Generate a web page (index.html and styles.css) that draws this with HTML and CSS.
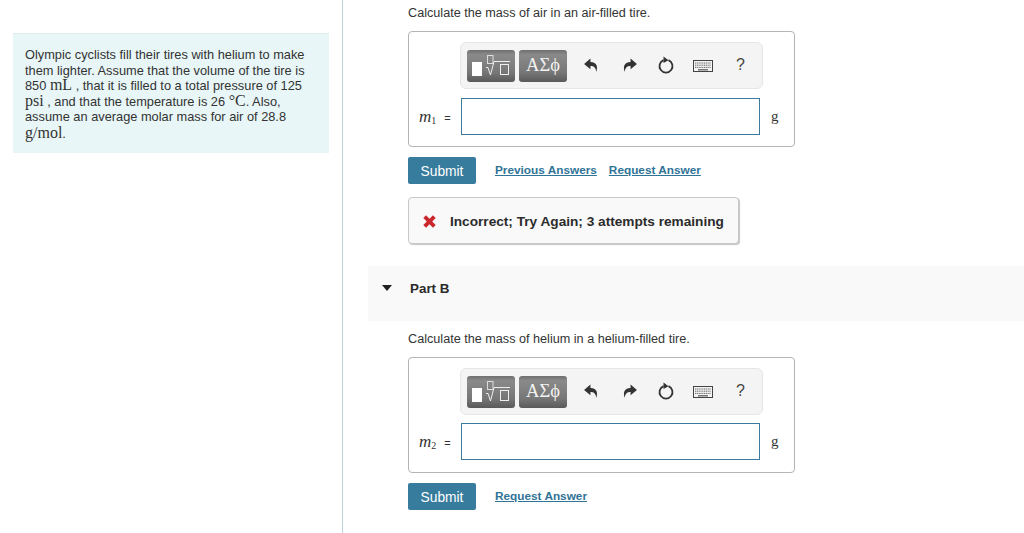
FILE: index.html
```html
<!DOCTYPE html>
<html lang="en">
<head>
    <meta charset="UTF-8">
    <title>Calculate the mass of air</title>
    <link rel="stylesheet" href="styles.css">
</head>
<body>
    <svg class="sprites" width="0" height="0">
        <symbol id="icoTemplate" viewBox="0 0 48 32">
            <rect x="5" y="12" width="10" height="14" fill="#fff"/>
            <rect x="20.500" y="5.500" width="5.500" height="8" fill="none" stroke="#ddd"/>
            <path d="M19 17.500h2l2.500 7.500 3.500-13.500H43" fill="none" stroke="#eee"/>
            <rect x="33.500" y="14.500" width="8" height="10" fill="none" stroke="#eee"/>
        </symbol>
        <symbol id="icoUndo" viewBox="0 0 16 16">
            <path d="M7 1.500 1 6.500l6 5V8.500c3 0 5 1 5.500 5.500 1.500-4.500 1-9-5.500-9.200z" fill="#333"/>
        </symbol>
        <symbol id="icoRedo" viewBox="0 0 16 16">
            <path d="M9 1.500l6 5-6 5V8.500c-3 0-5 1-5.500 5.500C2 9.500 2.500 5 9 4.800z" fill="#333"/>
        </symbol>
        <symbol id="icoReset" viewBox="0 0 18 18">
            <path d="M11.500 4.100a6.500 6.500 0 1 1-5 0" fill="none" stroke="#333" stroke-width="1.800"/>
            <path d="M6.500 0.500 11.500 4.200 6.500 7z" fill="#333"/>
        </symbol>
        <symbol id="icoKeys" viewBox="0 0 20 12">
            <rect x="0.500" y="0.500" width="19" height="11" fill="#f4f4f4" stroke="#444"/>
            <path d="M2 3h16M2 5.200h16M2 7.400h16" stroke="#666" stroke-dasharray="1.200 .6"/>
            <path d="M5 9.800h10" stroke="#555" stroke-width="1.200"/>
        </symbol>
    </svg>

    <aside class="intro-col">
        <div class="intro">
            Olympic cyclists fill their tires with helium to make<br>
            them lighter. Assume that the volume of the tire is<br>
            850 <span class="tex">mL</span> , that it is filled to a total pressure of 125<br>
            <span class="tex">psi</span> , and that the temperature is 26 <span class="tex">°C</span>. Also,<br>
            assume an average molar mass for air of 28.8
            <div class="intro-last"><span class="tex">g/mol</span>.</div>
        </div>
    </aside>

    <main class="main-col">
        <section class="part">
            <p class="prompt">Calculate the mass of air in an air-filled tire.</p>
            <div class="answer-box">
                <div class="toolbar">
                    <span class="tool-btn tool-tpl"><svg width="48" height="32"><use href="#icoTemplate"/></svg></span>
                    <span class="tool-btn tool-sym">ΑΣϕ</span>
                    <svg class="ico ico-undo"><use href="#icoUndo"/></svg>
                    <svg class="ico ico-redo"><use href="#icoRedo"/></svg>
                    <svg class="ico ico-reset"><use href="#icoReset"/></svg>
                    <svg class="ico ico-keys"><use href="#icoKeys"/></svg>
                    <span class="tool-help">?</span>
                </div>
                <div class="answer-row">
                    <span class="var"><i>m</i><sub>1</sub><span class="eq">=</span></span>
                    <input class="answer-input" type="text">
                    <span class="unit">g</span>
                </div>
            </div>
            <div class="actions">
                <button class="submit">Submit</button>
                <a class="link" href="#">Previous Answers</a>
                <a class="link" href="#">Request Answer</a>
            </div>
            <div class="feedback">
                <svg class="cross" width="15" height="15" viewBox="0 0 14 14"><path d="M2.500 2.500l9 9M11.500 2.500l-9 9" stroke="#c9282d" stroke-width="3.600"/></svg>
                <span>Incorrect; Try Again; 3 attempts remaining</span>
            </div>
        </section>

        <div class="part-head">
            <span class="caret"></span>
            <span class="part-title">Part B</span>
        </div>

        <section class="part part-b">
            <p class="prompt">Calculate the mass of helium in a helium-filled tire.</p>
            <div class="answer-box">
                <div class="toolbar">
                    <span class="tool-btn tool-tpl"><svg width="48" height="32"><use href="#icoTemplate"/></svg></span>
                    <span class="tool-btn tool-sym">ΑΣϕ</span>
                    <svg class="ico ico-undo"><use href="#icoUndo"/></svg>
                    <svg class="ico ico-redo"><use href="#icoRedo"/></svg>
                    <svg class="ico ico-reset"><use href="#icoReset"/></svg>
                    <svg class="ico ico-keys"><use href="#icoKeys"/></svg>
                    <span class="tool-help">?</span>
                </div>
                <div class="answer-row">
                    <span class="var"><i>m</i><sub>2</sub><span class="eq">=</span></span>
                    <input class="answer-input" type="text">
                    <span class="unit">g</span>
                </div>
            </div>
            <div class="actions">
                <button class="submit">Submit</button>
                <a class="link" href="#">Request Answer</a>
            </div>
        </section>
    </main>
</body>
</html>
```

FILE: styles.css
```css
body {
    margin: 0;
    height: 533px;
    overflow: hidden;
    display: flex;
    font-family: "Liberation Sans", Arial, sans-serif;
    font-size: 12.650px;
    color: #333;
    background: #fff;
}
.sprites {
    position: absolute;
}
.intro-col {
    width: 343px;
    height: 533px;
    flex-shrink: 0;
    box-sizing: border-box;
    border-right: 1px solid #b9d3de;
    padding-top: 33px;
    padding-left: 13px;
}
.intro {
    width: 316px;
    height: 120px;
    box-sizing: border-box;
    padding: 13px 0 0 12px;
    background: #e8f6f7;
    border-top: 1px solid #dfeaea;
    font-size: 12.800px;
    line-height: 15.600px;
    white-space: nowrap;
}
.intro-last {
    margin-top: 1px;
}
.tex {
    font-family: "Liberation Serif", "DejaVu Serif", serif;
    font-size: 16px;
    line-height: 0;
}
.main-col {
    flex: 1;
    min-width: 0;
}
.part {
    padding-left: 65px;
}
.prompt {
    margin: 0;
    height: 31px;
    padding-top: 6px;
    box-sizing: border-box;
    line-height: 15px;
}
.answer-box {
    width: 387px;
    height: 116px;
    box-sizing: border-box;
    padding: 10px 0 0 51px;
    border: 1px solid #b4b4b4;
    border-radius: 4px;
}
.toolbar {
    width: 303px;
    height: 47px;
    box-sizing: border-box;
    padding-left: 6px;
    position: relative;
    display: flex;
    align-items: center;
    gap: 4px;
    background: #f4f4f4;
    border: 1px solid #e6e6e6;
    border-radius: 6px;
}
.tool-btn {
    height: 32px;
    display: flex;
    align-items: center;
    justify-content: center;
    background: linear-gradient(#6f6f6f, #8a8a8a 15%, #777 70%, #5a5a5a);
    border-radius: 3px;
    color: #f2f2f2;
}
.tool-tpl {
    width: 48px;
}
.tool-sym {
    width: 48px;
    font-family: "Liberation Serif", "DejaVu Serif", serif;
    font-size: 18.500px;
}
.ico {
    position: absolute;
    top: 14px;
}
.ico-undo {
    left: 122px;
    width: 17px;
    height: 17px;
}
.ico-redo {
    left: 160px;
    width: 17px;
    height: 17px;
}
.ico-reset {
    left: 196px;
    top: 13px;
    width: 18px;
    height: 18px;
}
.ico-keys {
    left: 232px;
    top: 17px;
    width: 20px;
    height: 12px;
}
.tool-help {
    position: absolute;
    left: 275px;
    top: 13px;
    font-size: 16px;
    line-height: 18px;
    color: #444;
}
.answer-row {
    display: flex;
    align-items: center;
    margin-top: 9px;
    margin-left: -51px;
    height: 37px;
}
.part-b .answer-row {
    margin-top: 8px;
}
.var {
    width: 52px;
    box-sizing: border-box;
    padding-left: 10px;
    font-family: "Liberation Serif", "DejaVu Serif", serif;
    font-size: 17px;
    white-space: nowrap;
}
.var sub {
    font-size: 10px;
    line-height: 0;
    vertical-align: -2px;
}
.eq {
    font-family: "Liberation Sans", Arial, sans-serif;
    font-size: 11px;
    margin-left: 8px;
}
.answer-input {
    width: 299px;
    height: 37px;
    box-sizing: border-box;
    margin: 0;
    padding: 0;
    border: 1px solid #3b7a9c;
    background: #fff;
    outline: none;
}
.unit {
    margin-left: 11px;
    font-family: "Liberation Serif", "DejaVu Serif", serif;
    font-size: 15px;
}
.actions {
    display: flex;
    align-items: center;
    margin-top: 10px;
    height: 27px;
}
.submit {
    width: 68px;
    height: 27px;
    margin-right: 19px;
    padding: 1px 0 0;
    border: none;
    border-radius: 2px;
    background: #377b9d;
    color: #fff;
    font: 13.800px "Liberation Sans", Arial, sans-serif;
}
.link {
    margin-right: 12px;
    margin-top: -1px;
    font-size: 11.800px;
    font-weight: 700;
    color: #2f7396;
    text-decoration: underline;
    text-underline-offset: 1px;
}
.feedback {
    display: flex;
    align-items: center;
    gap: 13px;
    width: 331px;
    height: 47px;
    box-sizing: border-box;
    margin-top: 13px;
    padding: 1px 0 0 13px;
    background: #f9f9f9;
    border: 1px solid #c8c8c8;
    border-radius: 4px;
    box-shadow: 1px 1px 1px #c4c4c4;
    font-size: 13.650px;
    font-weight: 700;
    color: #2b2b2b;
    white-space: nowrap;
}
.part-head {
    display: flex;
    align-items: flex-start;
    height: 55px;
    box-sizing: border-box;
    margin: 22px 0 0 25px;
    padding: 15px 0 0 14px;
    background: #f9f9f9;
}
.caret {
    width: 0;
    height: 0;
    margin-top: 4px;
    border-style: solid;
    border-width: 6px 5px 0;
    border-color: #222 transparent transparent;
}
.part-title {
    margin-left: 18px;
    font-size: 13.400px;
    font-weight: 700;
    line-height: 16px;
    color: #2b2b2b;
}
.part-b .prompt {
    height: 36px;
    padding-top: 11px;
}
```
